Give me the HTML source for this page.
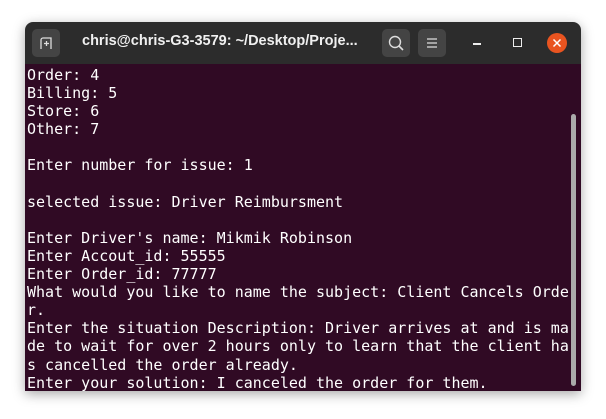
<!DOCTYPE html><html><head><style>
body{margin:0;width:606px;height:419px;background:#fff;position:relative;overflow:hidden}
.win{position:absolute;left:25px;top:22px;width:556px;height:369px;border-radius:8px 8px 0 0;overflow:hidden;box-shadow:0 3px 12px rgba(0,0,0,.35)}
.tb{position:absolute;left:0;top:0;width:556px;height:42px;background:#2c2c2c}
.btn{position:absolute;top:7px;width:28px;height:28px;border-radius:5px;background:#444}
.title{position:absolute;left:57px;top:11px;color:#f0f0f0;font:bold 14.5px "Liberation Sans",sans-serif;white-space:nowrap}
.term{position:absolute;left:0;top:42px;width:556px;height:327px;background:#300a24}
pre{margin:0;position:absolute;left:2px;top:2px;color:#fff;font:15px/18.1px "DejaVu Sans Mono",monospace}
.sb{position:absolute;left:546px;top:50px;width:5px;height:272px;border-radius:3px;background:#aaa}
</style></head><body><div class="win">
<div class="tb">
<div class="btn" style="left:7px"><svg width="28" height="28"><path d="M9 20V11a2 2 0 0 1 2-2h8v11" fill="none" stroke="#ddd" stroke-width="1.3"/><path d="M12 14.5h5M14.5 12v5" stroke="#ddd" stroke-width="1.3"/></svg></div>
<div class="title">chris@chris-G3-3579: ~/Desktop/Proje...</div>
<div class="btn" style="left:357px"><svg width="28" height="28"><circle cx="13" cy="13" r="5.5" fill="none" stroke="#ddd" stroke-width="1.4"/><path d="M17 17l4 4" stroke="#ddd" stroke-width="1.6"/></svg></div>
<div class="btn" style="left:393px"><svg width="28" height="28"><path d="M9 10h10M9 14h10M9 18h10" stroke="#ddd" stroke-width="1.3"/></svg></div>
<div style="position:absolute;left:448px;top:21px;width:8px;height:1.5px;background:#eee"></div>
<div style="position:absolute;left:488px;top:16px;width:7px;height:7px;border:1.4px solid #eee"></div>
<div style="position:absolute;left:522px;top:11px;width:20px;height:20px;border-radius:50%;background:#e95420"><svg width="20" height="20"><path d="M6.5 6.5l7 7M13.5 6.5l-7 7" stroke="#fff" stroke-width="1.5"/></svg></div>
</div>
<div class="term"><pre>Order: 4
Billing: 5
Store: 6
Other: 7

Enter number for issue: 1

selected issue: Driver Reimbursment

Enter Driver's name: Mikmik Robinson
Enter Accout_id: 55555
Enter Order_id: 77777
What would you like to name the subject: Client Cancels Orde
r.
Enter the situation Description: Driver arrives at and is ma
de to wait for over 2 hours only to learn that the client ha
s cancelled the order already.
Enter your solution: I canceled the order for them.</pre><div class="sb"></div></div>
</div></body></html>
